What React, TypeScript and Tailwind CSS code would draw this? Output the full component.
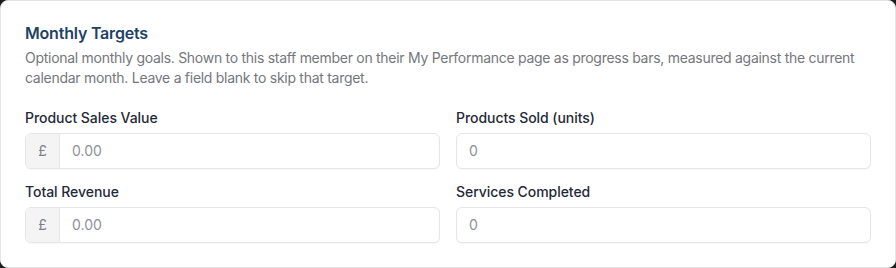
import React from 'react';

type Field = { label: string; placeholder: string; prefix?: string };

const fields: Field[] = [
  { label: 'Product Sales Value', placeholder: '0.00', prefix: '£' },
  { label: 'Products Sold (units)', placeholder: '0' },
  { label: 'Total Revenue', placeholder: '0.00', prefix: '£' },
  { label: 'Services Completed', placeholder: '0' },
];

const TargetInput = ({ field }: { field: Field }) => (
  <div className="flex flex-col">
    <label className="mb-[5px] text-sm leading-5 font-medium tracking-[-0.05px] text-[#1f2937]">{field.label}</label>
    <div className="flex h-9 rounded-md border border-[#e3e5e8] bg-white shadow-[0_1px_1px_rgba(0,0,0,0.03)] overflow-hidden">
      {field.prefix && (
        <span className="flex w-[34px] items-center justify-center border-r border-[#e3e5e8] bg-[#f4f4f5] text-sm text-[#7b7f87]">
          {field.prefix}
        </span>
      )}
      <input
        className="min-w-0 flex-1 bg-transparent px-3 text-sm text-[#1f2937] outline-none placeholder:text-[#8d9199]"
        placeholder={field.placeholder}
      />
    </div>
  </div>
);

export default function App() {
  return (
    <div className="h-[268px] w-[896px] bg-[#1c1c1c] font-['Inter',sans-serif]">
      <section className="h-full rounded-lg border border-[#e2e4e7] bg-white px-6 pt-5 pb-6">
        <h2 className="text-base leading-6 font-semibold tracking-[-0.2px] text-[#1f4266]">Monthly Targets</h2>
        <p className="mt-[3px] text-sm leading-5 tracking-[-0.28px] text-[#74777d]">
          Optional monthly goals. Shown to this staff member on their My Performance page as progress bars, measured
          against the current calendar month. Leave a field blank to skip that target.
        </p>
        <div className="mt-5 grid grid-cols-2 gap-x-4 gap-y-[13px]">
          {fields.map((f) => (
            <TargetInput key={f.label} field={f} />
          ))}
        </div>
      </section>
    </div>
  );
}
